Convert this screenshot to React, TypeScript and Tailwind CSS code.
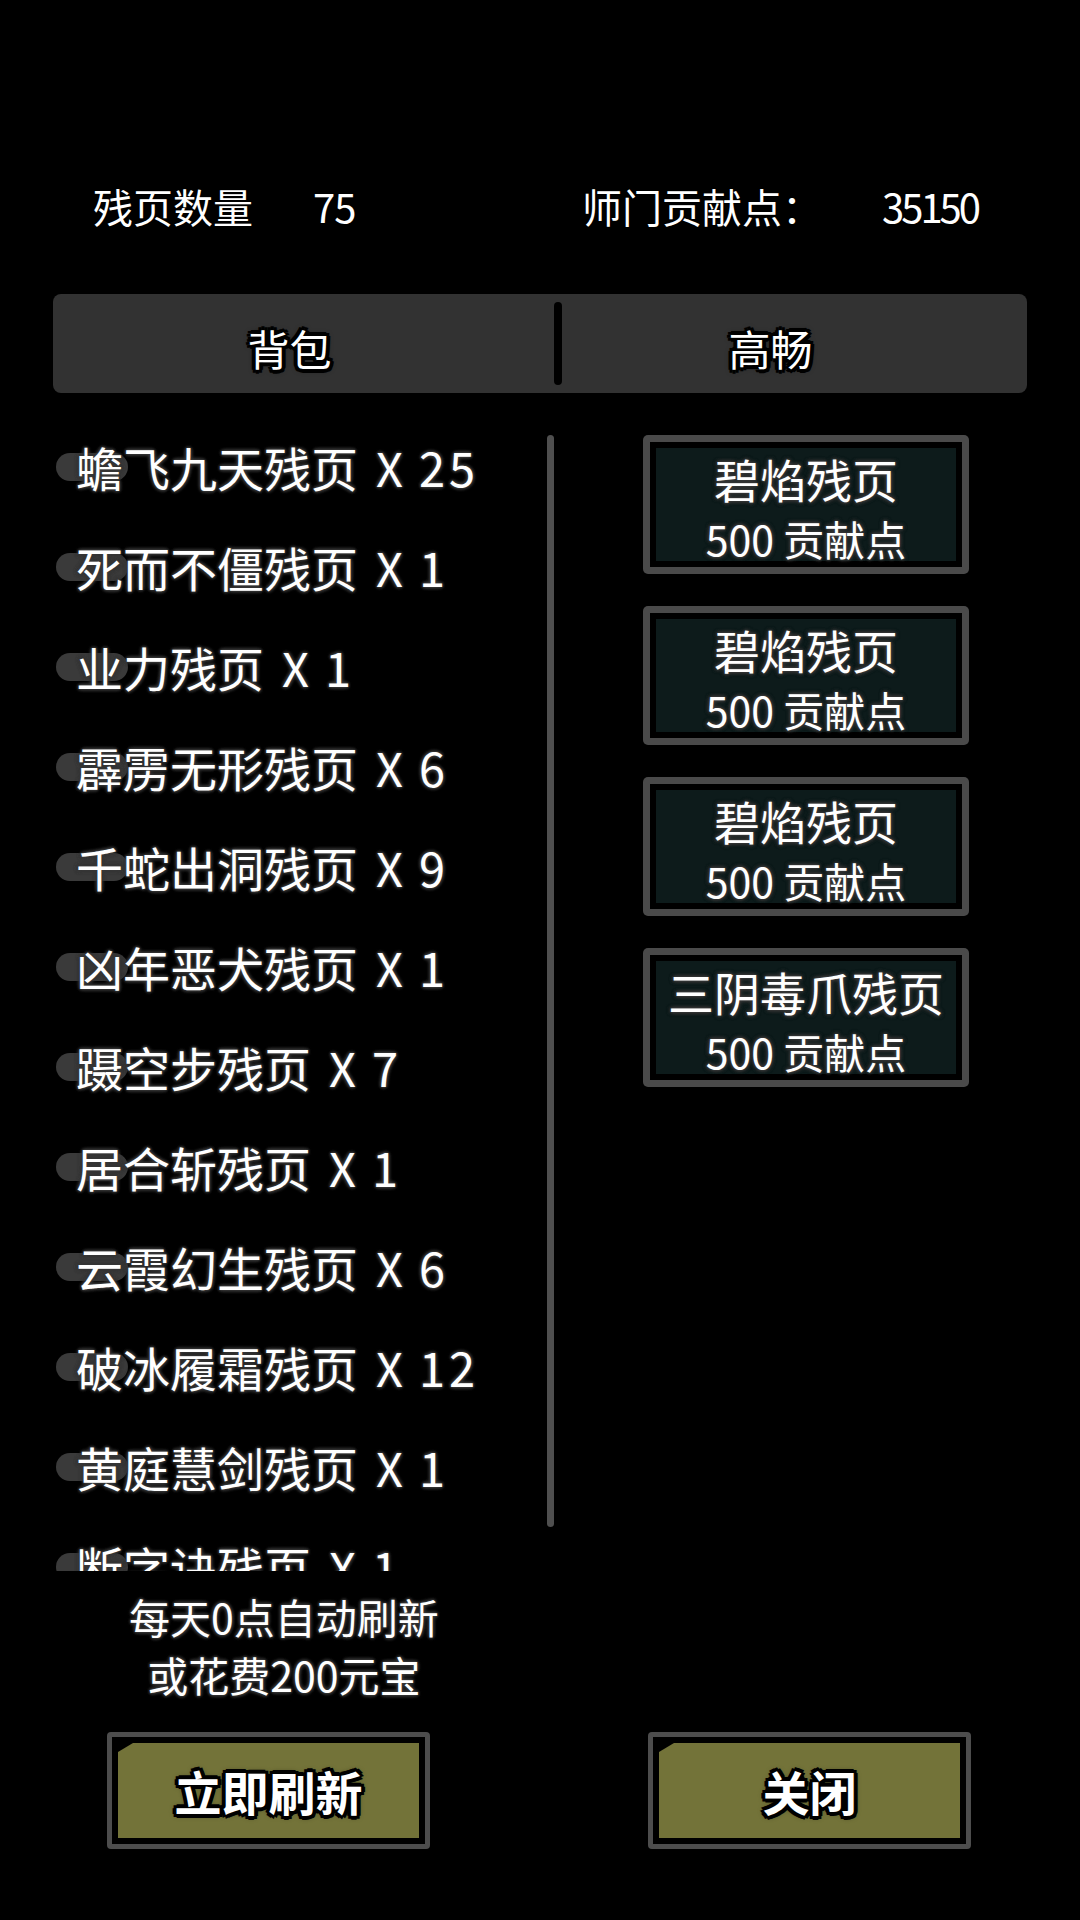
const items = [
  { name: '蟾飞九天残页', count: 25 },
  { name: '死而不僵残页', count: 1 },
  { name: '业力残页', count: 1 },
  { name: '霹雳无形残页', count: 6 },
  { name: '千蛇出洞残页', count: 9 },
  { name: '凶年恶犬残页', count: 1 },
  { name: '蹑空步残页', count: 7 },
  { name: '居合斩残页', count: 1 },
  { name: '云霞幻生残页', count: 6 },
  { name: '破冰履霜残页', count: 12 },
  { name: '黄庭慧剑残页', count: 1 },
  { name: '断字诀残页', count: 1 },
]

const shopItems = ['碧焰残页', '碧焰残页', '碧焰残页', '三阴毒爪残页']

// soft dark halo used on most game text
const halo =
  '[text-shadow:0_0_2px_#383838,0_0_3px_#383838,0_0_4px_#383838,0_0_4px_#383838,0_0_5px_#2a2a2a]'

// heavy black outline for tabs and buttons
const outline =
  '[text-shadow:-3px_-3px_0_#000,3px_-3px_0_#000,-3px_3px_0_#000,3px_3px_0_#000,0_-4px_0_#000,0_4px_0_#000,-4px_0_0_#000,4px_0_0_#000,0_0_6px_#000]'

const GameButton = ({ label }: { label: string }) => (
  <div className="w-[323px] h-[117px] rounded-[4px] bg-[#4d4d4d] p-[5px]">
    <div className="w-full h-full bg-black p-[6px]">
      <div className="w-full h-full bg-[#737339] [clip-path:polygon(15px_0,100%_0,100%_100%,0_100%,0_9px)] flex items-center justify-center">
        <span className={`text-[47px] font-bold text-white leading-[60px] ${outline}`}>
          {label}
        </span>
      </div>
    </div>
  </div>
)

export default function App() {
  return (
    <div className="w-[1080px] h-[1920px] bg-black text-white font-['Noto_Sans_CJK_SC','Noto_Sans',sans-serif] overflow-hidden">
      {/* top stats */}
      <div className="flex pt-[178px] h-[294px] text-[40px] leading-[56px]">
        <div className="flex gap-[60px] pl-[93px] w-[582px]">
          <span>残页数量</span>
          <span className="tracking-[-1px]">75</span>
        </div>
        <div className="flex gap-[60px]">
          <span>师门贡献点：</span>
          <span className="tracking-[-3px]">35150</span>
        </div>
      </div>

      {/* tabs */}
      <div className="mx-[53px] w-[974px] h-[99px] rounded-[8px] bg-[#323232] flex items-center">
        <div className={`flex-1 h-full flex items-center justify-center pr-[28px] pt-[8px] text-[42px] ${outline}`}>
          背包
        </div>
        <div className="w-[8px] h-[83px] rounded-full bg-black" />
        <div className={`w-[465px] h-full flex items-center justify-center pr-[48px] pt-[8px] text-[42px] ${outline}`}>
          高畅
        </div>
      </div>

      {/* content */}
      <div className="flex mt-[38px] h-[1140px]">
        <div className="w-[547px] h-[1140px] overflow-hidden">
          {items.map((it, i) => (
            <div key={i} className="relative h-[100px] pl-[76px]">
              <div className="absolute left-[56px] top-[22px] w-[72px] h-[28px] rounded-full bg-[#3a3a3a]" />
              <div className={`relative flex text-[47px] leading-[72px] whitespace-pre ${halo}`}>
                <span>{it.name}</span>
                <span className="ml-[18px]">X</span>
                <span className="ml-[16px] tracking-[4px]">{it.count}</span>
              </div>
            </div>
          ))}
        </div>
        <div className="mt-[4px] w-[7px] h-[1092px] rounded-full bg-[#4f4f4f]" />

        <div className="mt-[4px] ml-[89px] flex flex-col gap-[32px]">
          {shopItems.map((name, i) => (
            <div key={i} className="w-[326px] h-[139px] rounded-[5px] bg-[#4a4a4a] p-[7px]">
              <div className="w-full h-full bg-black p-[6px]">
                <div className="w-full h-full bg-[#0d1b1b] flex flex-col items-center">
                  <div className={`text-[46px] leading-[50px] mt-[5px] ${halo}`}>{name}</div>
                  <div className={`text-[41px] leading-[50px] mt-[10px] ${halo}`}>500 贡献点</div>
                </div>
              </div>
            </div>
          ))}
        </div>
      </div>

      {/* refresh hint */}
      <div className={`w-[568px] flex flex-col items-center text-[41px] leading-[58px] mt-[16px] ${halo}`}>
        <span>每天0点自动刷新</span>
        <span>或花费200元宝</span>
      </div>

      {/* buttons */}
      <div className="flex gap-[218px] pl-[107px] mt-[29px]">
        <GameButton label="立即刷新" />
        <GameButton label="关闭" />
      </div>
    </div>
  )
}
